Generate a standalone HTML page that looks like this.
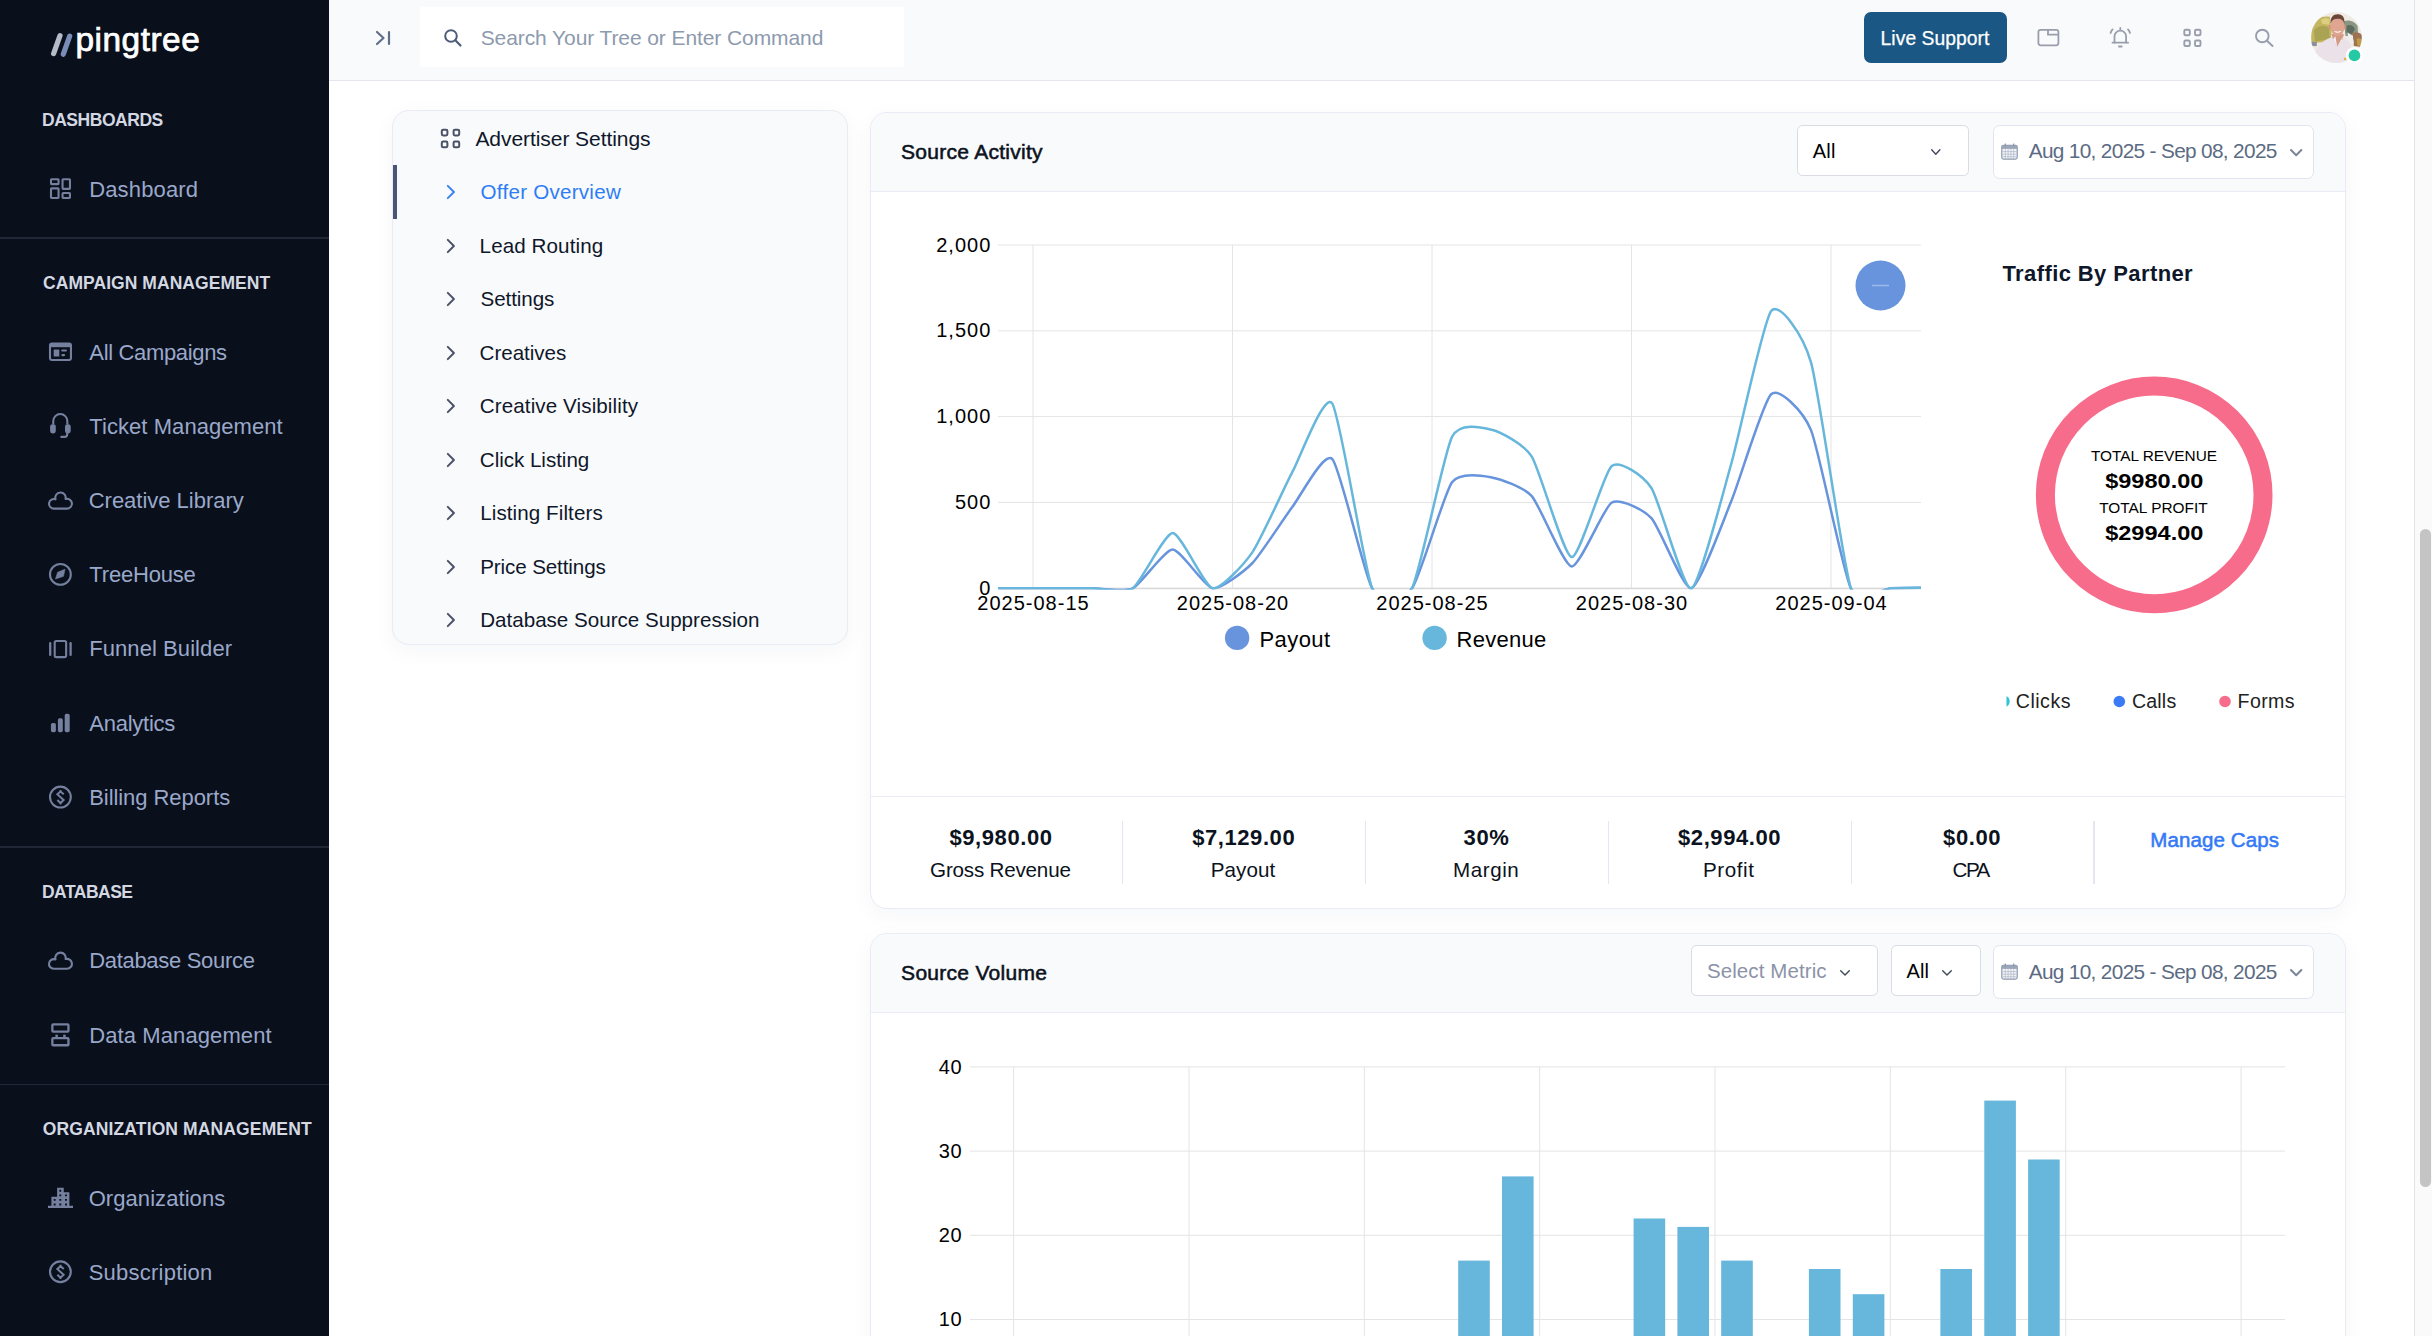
<!DOCTYPE html>
<html><head><meta charset="utf-8"><title>Pingtree</title>
<style>
*{box-sizing:border-box}
html,body{margin:0;padding:0;overflow:hidden}
#page{position:absolute;left:0;top:0;width:2432px;height:1336px;overflow:hidden}
body{width:2432px;height:1336px;overflow:hidden;position:relative;background:#fff;font-family:"Liberation Sans",sans-serif;color:#0f172a}
.abs{position:absolute}
.t{position:absolute;white-space:nowrap}
#side{position:absolute;left:0;top:0;width:328.7px;height:1336px;background:#090f1b}
.sd{position:absolute;left:0;width:329px;height:1.5px;background:#202838}
.ic{position:absolute;width:30px;height:30px;display:flex;align-items:center;justify-content:center}
#top{position:absolute;left:328.7px;top:0;width:2086px;height:81px;background:#f9fafb;border-bottom:1.2px solid #e3e6f1}
#search{position:absolute;left:419.5px;top:7.3px;width:484.5px;height:60.2px;background:#fff}
#live{position:absolute;left:1864.1px;top:12px;width:142.9px;height:51.2px;border-radius:7px;background:#1a5784}
#sbar{position:absolute;left:2414px;top:0;width:18px;height:1336px;background:#fafafa;border-left:1.5px solid #e4e4e4}
#sthumb{position:absolute;left:2419.5px;top:529px;width:11.5px;height:658px;border-radius:6px;background:#c4c4c4}
.card{position:absolute;background:#fff;border:1.5px solid #e9ebf5;border-radius:17px;box-shadow:0 6px 22px rgba(30,40,90,0.045);overflow:hidden}
.chead{position:absolute;left:0;top:0;right:0;height:79.3px;background:#f9fafb;border-bottom:1.5px solid #e9ebf5}
.ax{font-family:"Liberation Sans",sans-serif;font-size:20px;fill:#000;letter-spacing:1px}
.sel{position:absolute;background:#fff;border:1.5px solid #d9dce3;border-radius:5.5px}
.date{position:absolute;background:#fff;border:1.5px solid #e1e4ee;border-radius:6.5px}
.vsep{position:absolute;top:820.7px;width:1.5px;height:63.6px;background:#e4e7f1}
</style></head><body>
<div id="page">

<div id="side"></div>
<svg class="abs" style="left:48px;top:30px" width="28" height="30" viewBox="0 0 28 30"><line x1="5.6" y1="23.6" x2="12" y2="5.6" stroke="#b4bbc9" stroke-width="5.2" stroke-linecap="round"/><line x1="15.3" y1="24.2" x2="21.7" y2="6.2" stroke="#7a8cb8" stroke-width="5.2" stroke-linecap="round"/></svg>
<div class="t" style="left:75.50px;top:16.00px;font-size:33.4px;line-height:47px;font-weight:400;letter-spacing:0.515px;color:#fff;-webkit-text-stroke:0.75px #fff">pingtree</div>
<div class="t" style="left:42.00px;top:108.00px;font-size:17.5px;line-height:24px;font-weight:700;letter-spacing:-0.461px;color:#d3d8e2;">DASHBOARDS</div>
<div class="t" style="left:89.20px;top:174.00px;font-size:22px;line-height:31px;font-weight:400;letter-spacing:0.151px;color:#9aa8ca;">Dashboard</div>
<div class="sd" style="top:237.3px"></div>
<div class="t" style="left:43.00px;top:271.00px;font-size:17.5px;line-height:24px;font-weight:700;letter-spacing:0.055px;color:#d3d8e2;">CAMPAIGN MANAGEMENT</div>
<div class="t" style="left:89.30px;top:337.00px;font-size:22px;line-height:31px;font-weight:400;letter-spacing:-0.337px;color:#9aa8ca;">All Campaigns</div>
<div class="t" style="left:89.30px;top:411.00px;font-size:22px;line-height:31px;font-weight:400;letter-spacing:0.064px;color:#9aa8ca;">Ticket Management</div>
<div class="t" style="left:88.70px;top:485.00px;font-size:22px;line-height:31px;font-weight:400;letter-spacing:-0.012px;color:#9aa8ca;">Creative Library</div>
<div class="t" style="left:89.30px;top:559.00px;font-size:22px;line-height:31px;font-weight:400;letter-spacing:-0.185px;color:#9aa8ca;">TreeHouse</div>
<div class="t" style="left:89.20px;top:633.00px;font-size:22px;line-height:31px;font-weight:400;letter-spacing:0.074px;color:#9aa8ca;">Funnel Builder</div>
<div class="t" style="left:89.30px;top:708.00px;font-size:22px;line-height:31px;font-weight:400;letter-spacing:-0.254px;color:#9aa8ca;">Analytics</div>
<div class="t" style="left:89.20px;top:782.00px;font-size:22px;line-height:31px;font-weight:400;letter-spacing:-0.06px;color:#9aa8ca;">Billing Reports</div>
<div class="sd" style="top:846.3px"></div>
<div class="t" style="left:42.00px;top:880.00px;font-size:17.5px;line-height:24px;font-weight:700;letter-spacing:-0.522px;color:#d3d8e2;">DATABASE</div>
<div class="t" style="left:89.20px;top:945.00px;font-size:22px;line-height:31px;font-weight:400;letter-spacing:-0.304px;color:#9aa8ca;">Database Source</div>
<div class="t" style="left:89.20px;top:1020.00px;font-size:22px;line-height:31px;font-weight:400;letter-spacing:0.101px;color:#9aa8ca;">Data Management</div>
<div class="sd" style="top:1083.6px"></div>
<div class="t" style="left:42.80px;top:1117.00px;font-size:17.5px;line-height:24px;font-weight:700;letter-spacing:0.125px;color:#d3d8e2;">ORGANIZATION MANAGEMENT</div>
<div class="t" style="left:88.70px;top:1183.00px;font-size:22px;line-height:31px;font-weight:400;letter-spacing:0.063px;color:#9aa8ca;">Organizations</div>
<div class="t" style="left:88.70px;top:1257.00px;font-size:22px;line-height:31px;font-weight:400;letter-spacing:0.234px;color:#9aa8ca;">Subscription</div>

<svg class="abs" style="left:0;top:0" width="329" height="1336" viewBox="0 0 329 1336"><g fill="none" stroke="#74809e" stroke-width="2.1"><rect x="51.00" y="179.25" width="7.55" height="4.9" rx="0.6"/><rect x="62.55" y="179.25" width="7.4" height="9.6" rx="0.6"/><rect x="51.00" y="188.35" width="7.55" height="9.6" rx="0.6"/><rect x="62.55" y="193.05" width="7.4" height="4.9" rx="0.6"/></g><rect x="50.01" y="343.45" width="20.94" height="16.5" rx="1.9" fill="none" stroke="#74809e" stroke-width="2.1"/><rect x="49.96" y="343.40" width="21.04" height="3.8" fill="#74809e"/><rect x="53.66" y="349.40" width="5.65" height="7.1" rx="0.5" fill="#74809e"/><rect x="61.26" y="349.50" width="5.7" height="2" rx="1" fill="#74809e"/><rect x="61.26" y="353.90" width="3.9" height="2.3" rx="1.1" fill="#74809e"/><path d="M53.25 424.40V421.10a7.05 7.05 0 0 1 14.1 0V424.40" fill="none" stroke="#74809e" stroke-width="2.1"/><rect x="50.10" y="424.20" width="5.7" height="9.2" rx="2.4" fill="#74809e"/><rect x="65.00" y="424.20" width="5.7" height="9.2" rx="2.4" fill="#74809e"/><path d="M67.20 432.50v1.8a2.6 2.6 0 0 1-2.6 2.6h-3.3" fill="none" stroke="#74809e" stroke-width="2.1" stroke-linecap="round"/><path transform="translate(47.00 490.00)" d="M6.8 18.65A4.8 4.8 0 1 1 8.5 9.36A5.25 5.25 0 1 1 18.6 8.95A4.95 4.95 0 1 1 20 18.65Z" fill="none" stroke="#74809e" stroke-width="2.1" stroke-linejoin="round"/><circle cx="60.4" cy="574.4" r="10.4" fill="none" stroke="#74809e" stroke-width="2.1"/><path d="M65.00 569.20L63.50 576.30L55.50 579.00L57.60 572.30Z" fill="#74809e" stroke="#74809e" stroke-width="0.6" stroke-linejoin="round"/><rect x="54.70" y="641.05" width="11.45" height="16.1" rx="1.6" fill="none" stroke="#74809e" stroke-width="2.1"/><line x1="50.20" y1="643.20" x2="50.20" y2="654.90" fill="none" stroke="#74809e" stroke-width="2.3" stroke-linecap="round"/><line x1="70.60" y1="643.20" x2="70.60" y2="654.90" fill="none" stroke="#74809e" stroke-width="2.3" stroke-linecap="round"/><rect x="50.95" y="722.90" width="4.95" height="9.3" rx="1.7" fill="#74809e"/><rect x="57.90" y="718.20" width="4.9" height="14" rx="1.7" fill="#74809e"/><rect x="64.70" y="713.70" width="5" height="18.5" rx="1.7" fill="#74809e"/><circle cx="60.4" cy="797.05" r="10.4" fill="none" stroke="#74809e" stroke-width="2.1"/><path d="M63.75 794.35L60.50 791.50L57.35 794.35L63.60 800.05L60.50 803.00L57.35 800.05" fill="none" stroke="#74809e" stroke-width="2.0" stroke-linejoin="miter"/><path d="M60.50 790.05v2M60.50 802.45v1.8" fill="none" stroke="#74809e" stroke-width="1.8"/><path transform="translate(47.00 950.10)" d="M6.8 18.65A4.8 4.8 0 1 1 8.5 9.36A5.25 5.25 0 1 1 18.6 8.95A4.95 4.95 0 1 1 20 18.65Z" fill="none" stroke="#74809e" stroke-width="2.1" stroke-linejoin="round"/><rect x="52.35" y="1024.40" width="16.1" height="7.25" rx="0.8" fill="none" stroke="#74809e" stroke-width="2.3"/><rect x="52.35" y="1038.15" width="16.1" height="7.1" rx="0.8" fill="none" stroke="#74809e" stroke-width="2.3"/><rect x="55.40" y="1034.65" width="2.5" height="2.6" fill="#74809e"/><rect x="63.20" y="1034.65" width="2.5" height="2.6" fill="#74809e"/><path transform="translate(47.96 1187.70)" d="M3.44 9.1h5.7V0.4a0.4 0.4 0 0 1 .4-.4h5.85a0.4 0.4 0 0 1 .4.4V4.5h5.25a0.4 0.4 0 0 1 .4.4V18h3.6v2.3H0V18h3.44zM11.39 2.15h1.9v1.9h-1.9zM11.39 6.75h1.9v1.9h-1.9zM17.09 6.75h1.9v1.9h-1.9zM5.74 11.25h1.9v1.9h-1.9zM5.74 15.85h1.9v1.9h-1.9zM11.39 11.25h1.9v1.9h-1.9zM11.39 15.85h1.9v1.9h-1.9zM17.09 11.25h1.9v1.9h-1.9zM17.09 15.85h1.9v1.9h-1.9z" fill="#74809e" fill-rule="evenodd"/><circle cx="60.4" cy="1271.75" r="10.4" fill="none" stroke="#74809e" stroke-width="2.1"/><path d="M63.75 1269.05L60.50 1266.20L57.35 1269.05L63.60 1274.75L60.50 1277.70L57.35 1274.75" fill="none" stroke="#74809e" stroke-width="2.0" stroke-linejoin="miter"/><path d="M60.50 1264.75v2M60.50 1277.15v1.8" fill="none" stroke="#74809e" stroke-width="1.8"/></svg>

<div id="top"></div>
<svg class="abs" style="left:374px;top:28px" width="20" height="20" viewBox="0 0 20 20"><path d="M3 4l6.5 6-6.5 6" fill="none" stroke="#5f6f8a" stroke-width="2.2" stroke-linecap="round" stroke-linejoin="round"/><line x1="15" y1="4" x2="15" y2="16" stroke="#5f6f8a" stroke-width="2.2" stroke-linecap="round"/></svg>
<div id="search"></div>
<svg class="abs" style="left:442.5px;top:27.5px" width="20" height="20" viewBox="0 0 20 20"><circle cx="8" cy="8" r="5.8" fill="none" stroke="#4d5d78" stroke-width="2"/><line x1="12.3" y1="12.3" x2="17.5" y2="17.5" stroke="#4d5d78" stroke-width="2.2" stroke-linecap="round"/></svg>
<div class="t" style="left:480.70px;top:23.00px;font-size:21px;line-height:29px;font-weight:400;letter-spacing:-0.09px;color:#8d9aae;">Search Your Tree or Enter Command</div>
<div id="live"></div>
<div class="t" style="left:1880.60px;top:25.00px;font-size:19.3px;line-height:27px;font-weight:400;letter-spacing:0.045px;color:#fff;-webkit-text-stroke:0.25px #fff">Live Support</div>
<svg class="abs" style="left:2037px;top:28px" width="23" height="19" viewBox="0 0 23 19"><rect x="1.4" y="1.8" width="20" height="15.5" rx="2.2" fill="none" stroke="#999eac" stroke-width="1.8"/><path d="M11 2v4.7h10.4" fill="none" stroke="#999eac" stroke-width="1.8"/></svg>
<svg class="abs" style="left:2108px;top:26px" width="24" height="23" viewBox="0 0 24 23"><g fill="none" stroke="#999eac" stroke-width="1.8" stroke-linecap="round" stroke-linejoin="round"><path d="M6.5 16.5V10.5a5.8 5.8 0 0 1 11.6 0v6"/><path d="M4.5 16.7h15.6"/><path d="M12.3 2v2.2"/><path d="M10.9 20.5h2.8"/><path d="M4.6 3.4a9 9 0 0 0-2 3.6"/><path d="M20 3.4a9 9 0 0 1 2 3.6"/></g></svg>
<svg class="abs" style="left:2182px;top:27px" width="21" height="21" viewBox="0 0 21 21"><g fill="none" stroke="#999eac" stroke-width="1.9"><rect x="2.3" y="2.7" width="5.5" height="5.5" rx="1.3"/><rect x="13" y="2.7" width="5.5" height="5.5" rx="1.3"/><rect x="2.3" y="13.5" width="5.5" height="5.5" rx="1.3"/><rect x="13" y="13.5" width="5.5" height="5.5" rx="1.3"/></g></svg>
<svg class="abs" style="left:2253px;top:27px" width="22" height="22" viewBox="0 0 22 22"><circle cx="9.3" cy="9" r="6.3" fill="none" stroke="#999eac" stroke-width="1.9"/><line x1="14" y1="13.7" x2="19.5" y2="19" stroke="#999eac" stroke-width="2" stroke-linecap="round"/></svg>
<!-- avatar -->
<svg class="abs" style="left:2311.3px;top:11.8px" width="50.8" height="51" viewBox="115 125 1095 1100"><defs><clipPath id="av"><circle cx="662" cy="675" r="548"/></clipPath><filter id="bl" x="-10%" y="-10%" width="120%" height="120%"><feGaussianBlur stdDeviation="15"/></filter></defs><g clip-path="url(#av)"><rect x="100" y="100" width="1150" height="1150" fill="#efeae2"/><g filter="url(#bl)"><path d="M120 420C200 260 380 200 520 230L560 520 540 760 120 800z" fill="#c4b562"/><path d="M180 520C260 420 400 400 500 470L520 700 200 760z" fill="#a9a352"/><path d="M330 300C400 250 470 250 520 290L500 400 360 380z" fill="#dccf80"/><path d="M820 330C930 280 1060 330 1120 430L1130 620 860 640z" fill="#8a9684"/><path d="M880 420C960 380 1040 420 1060 500L1000 600 880 580z" fill="#5d6c5e"/><path d="M1010 580C1080 540 1160 560 1215 620L1215 880 1040 860z" fill="#9d7252"/><path d="M1100 700C1150 680 1200 700 1215 740L1215 860 1110 850z" fill="#c09a48"/><path d="M900 560L1010 640 1040 800 940 780z" fill="#eeeeee"/><rect x="100" y="770" width="140" height="90" fill="#8a8f9a"/><path d="M180 1250C160 980 260 800 480 700L640 640 800 690C960 740 1010 860 1030 1250z" fill="#ebe1e9"/><path d="M560 600L820 600 800 720 680 870 590 720z" fill="#d39a84"/><ellipse cx="688" cy="440" rx="152" ry="205" fill="#dfa590"/><ellipse cx="518" cy="450" rx="24" ry="50" fill="#d9927e"/><ellipse cx="845" cy="450" rx="20" ry="46" fill="#d9927e"/><path d="M540 380C520 240 600 170 700 175C800 180 850 250 832 380C815 300 770 270 690 268C610 266 560 300 540 380z" fill="#6a4638"/><path d="M620 545Q690 590 765 540Q695 565 620 545z" fill="#fff" stroke="#fff" stroke-width="10"/><path d="M640 640L680 870 590 720z" fill="#f4eef3"/><path d="M800 660L680 870 790 740z" fill="#f4eef3"/><circle cx="850" cy="1140" r="28" fill="#d7b83a"/></g></g><circle cx="1052" cy="1062" r="186" fill="#fff"/><circle cx="1052" cy="1062" r="126" fill="#25c9a4"/></svg>

<div id="sbar"></div><div id="sthumb"></div>

<!-- left panel -->
<div class="card" style="left:391.5px;top:109.8px;width:456.5px;height:535.5px;background:#f9fafb"></div>
<div class="abs" style="left:393px;top:165px;width:4.3px;height:53.5px;background:#4b5675"></div>
<svg class="abs" style="left:439.5px;top:127.5px" width="21" height="21" viewBox="0 0 21 21"><g fill="none" stroke="#4b5268" stroke-width="2"><rect x="1.8" y="1.8" width="5.6" height="5.6" rx="1.3"/><rect x="13.6" y="1.8" width="5.6" height="5.6" rx="1.3"/><rect x="1.8" y="13.6" width="5.6" height="5.6" rx="1.3"/><rect x="13.6" y="13.6" width="5.6" height="5.6" rx="1.3"/></g></svg>
<svg class="abs" style="left:445.0px;top:183.0px" width="12" height="18" viewBox="0 0 12 18"><path d="M2.8 2.9l6.1 6.1-6.1 6.1" fill="none" stroke="#3b82f6" stroke-width="2" stroke-linecap="round" stroke-linejoin="round"/></svg><div class="t" style="left:480.60px;top:177.00px;font-size:20.6px;line-height:29px;font-weight:400;letter-spacing:0.248px;color:#2f7df6;">Offer Overview</div>
<svg class="abs" style="left:445.0px;top:236.5px" width="12" height="18" viewBox="0 0 12 18"><path d="M2.8 2.9l6.1 6.1-6.1 6.1" fill="none" stroke="#4b5268" stroke-width="2" stroke-linecap="round" stroke-linejoin="round"/></svg><div class="t" style="left:479.60px;top:231.00px;font-size:20.6px;line-height:29px;font-weight:400;letter-spacing:0.094px;color:#0f172a;">Lead Routing</div>
<svg class="abs" style="left:445.0px;top:290.0px" width="12" height="18" viewBox="0 0 12 18"><path d="M2.8 2.9l6.1 6.1-6.1 6.1" fill="none" stroke="#4b5268" stroke-width="2" stroke-linecap="round" stroke-linejoin="round"/></svg><div class="t" style="left:480.60px;top:284.00px;font-size:20.6px;line-height:29px;font-weight:400;letter-spacing:-0.102px;color:#0f172a;">Settings</div>
<svg class="abs" style="left:445.0px;top:343.5px" width="12" height="18" viewBox="0 0 12 18"><path d="M2.8 2.9l6.1 6.1-6.1 6.1" fill="none" stroke="#4b5268" stroke-width="2" stroke-linecap="round" stroke-linejoin="round"/></svg><div class="t" style="left:479.60px;top:338.00px;font-size:20.6px;line-height:29px;font-weight:400;letter-spacing:-0.048px;color:#0f172a;">Creatives</div>
<svg class="abs" style="left:445.0px;top:397.0px" width="12" height="18" viewBox="0 0 12 18"><path d="M2.8 2.9l6.1 6.1-6.1 6.1" fill="none" stroke="#4b5268" stroke-width="2" stroke-linecap="round" stroke-linejoin="round"/></svg><div class="t" style="left:479.80px;top:391.00px;font-size:20.6px;line-height:29px;font-weight:400;letter-spacing:0.099px;color:#0f172a;">Creative Visibility</div>
<svg class="abs" style="left:445.0px;top:450.5px" width="12" height="18" viewBox="0 0 12 18"><path d="M2.8 2.9l6.1 6.1-6.1 6.1" fill="none" stroke="#4b5268" stroke-width="2" stroke-linecap="round" stroke-linejoin="round"/></svg><div class="t" style="left:479.80px;top:445.00px;font-size:20.6px;line-height:29px;font-weight:400;letter-spacing:-0.034px;color:#0f172a;">Click Listing</div>
<svg class="abs" style="left:445.0px;top:504.0px" width="12" height="18" viewBox="0 0 12 18"><path d="M2.8 2.9l6.1 6.1-6.1 6.1" fill="none" stroke="#4b5268" stroke-width="2" stroke-linecap="round" stroke-linejoin="round"/></svg><div class="t" style="left:480.20px;top:498.00px;font-size:20.6px;line-height:29px;font-weight:400;letter-spacing:0.085px;color:#0f172a;">Listing Filters</div>
<svg class="abs" style="left:445.0px;top:557.5px" width="12" height="18" viewBox="0 0 12 18"><path d="M2.8 2.9l6.1 6.1-6.1 6.1" fill="none" stroke="#4b5268" stroke-width="2" stroke-linecap="round" stroke-linejoin="round"/></svg><div class="t" style="left:480.20px;top:552.00px;font-size:20.6px;line-height:29px;font-weight:400;letter-spacing:-0.112px;color:#0f172a;">Price Settings</div>
<svg class="abs" style="left:445.0px;top:611.0px" width="12" height="18" viewBox="0 0 12 18"><path d="M2.8 2.9l6.1 6.1-6.1 6.1" fill="none" stroke="#4b5268" stroke-width="2" stroke-linecap="round" stroke-linejoin="round"/></svg><div class="t" style="left:480.20px;top:605.00px;font-size:20.6px;line-height:29px;font-weight:400;letter-spacing:-0.003px;color:#0f172a;">Database Source Suppression</div>
<div class="t" style="left:475.40px;top:124.00px;font-size:21px;line-height:29px;font-weight:400;letter-spacing:-0.058px;color:#0f172a;">Advertiser Settings</div>

<!-- source activity card -->
<div class="card" style="left:869.7px;top:111.8px;width:1476.2px;height:797px">
 <div class="chead"></div>
 <div class="abs" style="left:0;right:0;top:683.2px;height:1.5px;background:#e9ebf5"></div>
</div>
<div class="t" style="left:901.10px;top:137.00px;font-size:21px;line-height:29px;font-weight:400;letter-spacing:0.266px;color:#0b1220;-webkit-text-stroke:0.55px currentColor">Source Activity</div>
<div class="sel" style="left:1797.2px;top:124.8px;width:171.7px;height:50.8px"></div>
<div class="t" style="left:1812.70px;top:137.00px;font-size:20px;line-height:28px;font-weight:400;letter-spacing:0.208px;color:#000;">All</div>
<svg class="abs" style="left:1928.7px;top:147.4px" width="13.6" height="9.9" viewBox="-2 -2 13.6 9.9"><path d="M0.70 0.70L4.80 5.20L8.90 0.70" fill="none" stroke="#3f4a5a" stroke-width="1.4" stroke-linecap="round" stroke-linejoin="round"/></svg>
<div class="date" style="left:1992.7px;top:124.8px;width:321px;height:53.9px"></div><svg class="abs" style="left:2001.4px;top:142.6px" width="17" height="17" viewBox="0 0 17 17"><rect x="0.8" y="2.3" width="15.4" height="13.8" rx="1.8" fill="#f3f5f9" stroke="#8b97aa" stroke-width="1.2"/><rect x="0.8" y="2.3" width="15.4" height="3.6" fill="#9ba6b8"/><g stroke="#8b97aa" stroke-width="1.2"><line x1="4.3" y1="0.5" x2="4.3" y2="3.5"/><line x1="12.7" y1="0.5" x2="12.7" y2="3.5"/></g><g stroke="#b4bccb" stroke-width="0.8"><line x1="1.5" y1="8.6" x2="15.5" y2="8.6"/><line x1="1.5" y1="11.2" x2="15.5" y2="11.2"/><line x1="1.5" y1="13.7" x2="15.5" y2="13.7"/><line x1="4.3" y1="6.2" x2="4.3" y2="15.5"/><line x1="7.1" y1="6.2" x2="7.1" y2="15.5"/><line x1="9.9" y1="6.2" x2="9.9" y2="15.5"/><line x1="12.7" y1="6.2" x2="12.7" y2="15.5"/></g></svg><div class="t" style="left:2028.70px;top:136.00px;font-size:20.8px;line-height:29px;font-weight:400;letter-spacing:-0.665px;color:#5b6b83;">Aug 10, 2025 - Sep 08, 2025</div><svg class="abs" style="left:2288.4px;top:146.6px" width="16.4" height="11.2" viewBox="-2 -2 16.4 11.2"><path d="M1.00 1.00L6.20 6.20L11.40 1.00" fill="none" stroke="#7b8799" stroke-width="2" stroke-linecap="round" stroke-linejoin="round"/></svg>

<svg class="abs" style="left:0;top:0" width="2432" height="800" viewBox="0 0 2432 800">
<defs><clipPath id="plot"><rect x="996" y="240" width="926" height="349.5"/></clipPath><clipPath id="lc"><rect x="2006.5" y="690" width="20" height="24"/></clipPath></defs>
<line x1="998" y1="245.0" x2="1921" y2="245.0" stroke="#e4e4e4" stroke-width="1"/><text x="991.3" y="251.6" text-anchor="end" class="ax">2,000</text><line x1="998" y1="330.8" x2="1921" y2="330.8" stroke="#e4e4e4" stroke-width="1"/><text x="991.3" y="337.4" text-anchor="end" class="ax">1,500</text><line x1="998" y1="416.6" x2="1921" y2="416.6" stroke="#e4e4e4" stroke-width="1"/><text x="991.3" y="423.2" text-anchor="end" class="ax">1,000</text><line x1="998" y1="502.4" x2="1921" y2="502.4" stroke="#e4e4e4" stroke-width="1"/><text x="991.3" y="509.0" text-anchor="end" class="ax">500</text><line x1="998" y1="588.2" x2="1921" y2="588.2" stroke="#e4e4e4" stroke-width="1"/><text x="991.3" y="594.8" text-anchor="end" class="ax">0</text><line x1="1033.0" y1="245" x2="1033.0" y2="588" stroke="#e4e4e4" stroke-width="1"/><text x="1033.5" y="610.4" text-anchor="middle" class="ax">2025-08-15</text><line x1="1232.5" y1="245" x2="1232.5" y2="588" stroke="#e4e4e4" stroke-width="1"/><text x="1233.0" y="610.4" text-anchor="middle" class="ax">2025-08-20</text><line x1="1432.0" y1="245" x2="1432.0" y2="588" stroke="#e4e4e4" stroke-width="1"/><text x="1432.5" y="610.4" text-anchor="middle" class="ax">2025-08-25</text><line x1="1631.5" y1="245" x2="1631.5" y2="588" stroke="#e4e4e4" stroke-width="1"/><text x="1632.0" y="610.4" text-anchor="middle" class="ax">2025-08-30</text><line x1="1831.0" y1="245" x2="1831.0" y2="588" stroke="#e4e4e4" stroke-width="1"/><text x="1831.5" y="610.4" text-anchor="middle" class="ax">2025-09-04</text>
<line x1="998" y1="588.5" x2="1921" y2="588.5" stroke="#d9d9d9" stroke-width="1.5"/>
<g clip-path="url(#plot)" fill="none" stroke-width="2.5" stroke-linejoin="round">
<path d="M998.0,588.3C1003.5,588.3 1043.5,588.3 1053.0,588.3C1062.4,588.3 1084.9,588.3 1092.8,588.3C1100.8,588.3 1124.8,592.2 1132.8,588.3C1140.7,584.4 1164.7,549.6 1172.7,549.6C1180.6,549.6 1204.6,587.0 1212.5,588.3C1220.5,589.6 1244.5,571.1 1252.5,563.0C1260.4,554.8 1284.4,517.4 1292.3,507.0C1300.3,496.6 1324.3,450.8 1332.2,458.9C1340.2,467.0 1364.2,575.4 1372.2,588.3C1380.1,601.2 1404.1,598.9 1412.0,588.3C1420.0,577.7 1444.0,493.4 1452.0,482.3C1459.9,471.2 1483.9,476.0 1491.8,477.4C1499.8,478.8 1523.8,487.2 1531.8,496.1C1539.7,505.0 1563.7,565.8 1571.7,566.5C1579.6,567.1 1603.6,507.7 1611.5,502.8C1619.5,498.0 1643.5,509.5 1651.4,518.1C1659.4,526.6 1683.4,590.0 1691.3,588.3C1699.3,586.6 1723.3,520.7 1731.2,501.3C1739.2,481.9 1763.2,401.3 1771.2,394.2C1779.1,387.1 1803.1,410.7 1811.0,430.1C1819.0,449.5 1843.0,572.5 1850.9,588.3C1858.9,604.1 1883.8,588.3 1890.8,588.3C1897.9,588.2 1918.0,587.8 1921.0,587.8" stroke="#6794dc"/>
<path d="M998.0,588.3C1003.5,588.3 1043.5,588.3 1053.0,588.3C1062.4,588.3 1084.9,588.3 1092.8,588.3C1100.8,588.3 1124.8,593.8 1132.8,588.3C1140.7,582.8 1164.7,533.1 1172.7,533.1C1180.6,533.1 1204.6,586.4 1212.5,588.3C1220.5,590.2 1244.5,563.7 1252.5,552.1C1260.4,540.5 1284.4,487.1 1292.3,472.2C1300.3,457.3 1324.3,391.8 1332.2,403.4C1340.2,415.0 1364.2,569.8 1372.2,588.3C1380.1,606.8 1404.1,603.4 1412.0,588.3C1420.0,573.2 1444.0,452.7 1452.0,436.9C1459.9,421.0 1483.9,427.9 1491.8,429.8C1499.8,431.8 1523.8,443.9 1531.8,456.6C1539.7,469.3 1563.7,556.1 1571.7,557.1C1579.6,558.0 1603.6,473.1 1611.5,466.2C1619.5,459.3 1643.5,475.8 1651.4,488.0C1659.4,500.2 1683.4,590.7 1691.3,588.3C1699.3,585.9 1723.3,491.7 1731.2,464.0C1739.2,436.2 1763.2,321.2 1771.2,311.0C1779.1,300.8 1803.1,334.5 1811.0,362.3C1819.0,390.0 1843.0,565.7 1850.9,588.3C1858.9,610.9 1883.8,588.3 1890.8,588.3C1897.9,588.2 1918.0,587.8 1921.0,587.8" stroke="#67b7dc"/>
</g>
<circle cx="1880.5" cy="285.5" r="25" fill="#6794dc"/>
<line x1="1872" y1="285.5" x2="1889" y2="285.5" stroke="#9fbaea" stroke-width="1.5"/>
<circle cx="1237.1" cy="637.9" r="12.2" fill="#6794dc"/>
<text x="1259.50" y="646.5" style="font-family:'Liberation Sans',sans-serif;font-size:22px;font-weight:400;fill:#000;letter-spacing:0.424px">Payout</text>
<circle cx="1434.6" cy="637.9" r="12.2" fill="#67b7dc"/>
<text x="1456.50" y="646.5" style="font-family:'Liberation Sans',sans-serif;font-size:22px;font-weight:400;fill:#000;letter-spacing:0.278px">Revenue</text>
<!-- donut -->
<circle cx="2154.2" cy="494.9" r="108.8" fill="none" stroke="#f86c8b" stroke-width="19"/>
<text x="2090.90" y="460.9" style="font-family:'Liberation Sans',sans-serif;font-size:15.4px;font-weight:400;fill:#000;letter-spacing:-0.008px">TOTAL REVENUE</text>
<text x="2105.2" y="488.1" textLength="98.2" lengthAdjust="spacingAndGlyphs" style="font-family:'Liberation Sans',sans-serif;font-size:19.4px;font-weight:700;fill:#000">$9980.00</text>
<text x="2099.20" y="512.7" style="font-family:'Liberation Sans',sans-serif;font-size:15.4px;font-weight:400;fill:#000;letter-spacing:0.011px">TOTAL PROFIT</text>
<text x="2105.2" y="540.4" textLength="98.2" lengthAdjust="spacingAndGlyphs" style="font-family:'Liberation Sans',sans-serif;font-size:19.4px;font-weight:700;fill:#000">$2994.00</text>
<!-- pie legend -->
<circle cx="2004" cy="701.4" r="5.7" fill="#2bc3d6" clip-path="url(#lc)"/>
<text x="2015.80" y="707.8" style="font-family:'Liberation Sans',sans-serif;font-size:19.6px;font-weight:400;fill:#222;letter-spacing:0.49px">Clicks</text>
<circle cx="2119.3" cy="701.5" r="5.8" fill="#3b7cf6"/>
<text x="2131.90" y="707.8" style="font-family:'Liberation Sans',sans-serif;font-size:19.6px;font-weight:400;fill:#222;letter-spacing:0.187px">Calls</text>
<circle cx="2225" cy="701.5" r="5.8" fill="#f86c8b"/>
<text x="2237.60" y="707.8" style="font-family:'Liberation Sans',sans-serif;font-size:19.6px;font-weight:400;fill:#222;letter-spacing:0.372px">Forms</text>
</svg>
<div class="t" style="left:2002.50px;top:258.00px;font-size:22px;line-height:31px;font-weight:700;letter-spacing:0.398px;color:#0f172a;">Traffic By Partner</div>

<!-- stats -->
<div class="t" style="left:949.50px;top:822.00px;font-size:22px;line-height:31px;font-weight:700;letter-spacing:0.57px;color:#0b1220;">$9,980.00</div><div class="t" style="left:930.10px;top:855.00px;font-size:20.6px;line-height:29px;font-weight:400;letter-spacing:-0.194px;color:#0b1220;">Gross Revenue</div>
<div class="t" style="left:1192.20px;top:822.00px;font-size:22px;line-height:31px;font-weight:700;letter-spacing:0.57px;color:#0b1220;">$7,129.00</div><div class="t" style="left:1210.70px;top:855.00px;font-size:20.6px;line-height:29px;font-weight:400;letter-spacing:0.101px;color:#0b1220;">Payout</div>
<div class="t" style="left:1463.60px;top:822.00px;font-size:22px;line-height:31px;font-weight:700;letter-spacing:0.565px;color:#0b1220;">30%</div><div class="t" style="left:1453.10px;top:855.00px;font-size:20.6px;line-height:29px;font-weight:400;letter-spacing:0.541px;color:#0b1220;">Margin</div>
<div class="t" style="left:1678.00px;top:822.00px;font-size:22px;line-height:31px;font-weight:700;letter-spacing:0.583px;color:#0b1220;">$2,994.00</div><div class="t" style="left:1702.90px;top:855.00px;font-size:20.6px;line-height:29px;font-weight:400;letter-spacing:0.611px;color:#0b1220;">Profit</div>
<div class="t" style="left:1943.10px;top:822.00px;font-size:22px;line-height:31px;font-weight:700;letter-spacing:0.595px;color:#0b1220;">$0.00</div><div class="t" style="left:1952.60px;top:855.00px;font-size:20.6px;line-height:29px;font-weight:400;letter-spacing:-1.59px;color:#0b1220;">CPA</div>
<div class="vsep" style="left:1121.8px"></div><div class="vsep" style="left:1364.8px"></div><div class="vsep" style="left:1607.5px"></div><div class="vsep" style="left:1850.9px"></div><div class="vsep" style="left:2093.1px"></div><div class="t" style="left:2150.30px;top:825.00px;font-size:20.5px;line-height:29px;font-weight:400;letter-spacing:0.102px;color:#3479f6;-webkit-text-stroke:0.55px currentColor">Manage Caps</div>

<!-- source volume card -->
<div class="card" style="left:869.7px;top:932.5px;width:1476.2px;height:460px">
 <div class="chead"></div>
</div>
<div class="t" style="left:901.10px;top:958.00px;font-size:21px;line-height:29px;font-weight:400;letter-spacing:0.28px;color:#0b1220;-webkit-text-stroke:0.55px currentColor">Source Volume</div>
<div class="sel" style="left:1691.4px;top:945.3px;width:186.9px;height:51px"></div>
<div class="t" style="left:1706.90px;top:956.00px;font-size:20.5px;line-height:29px;font-weight:400;letter-spacing:0.098px;color:#8b92a8;">Select Metric</div>
<svg class="abs" style="left:1838.0px;top:968.2px" width="14.0" height="9.8" viewBox="-2 -2 14.0 9.8"><path d="M0.70 0.70L5.00 5.10L9.30 0.70" fill="none" stroke="#3f4a5a" stroke-width="1.4" stroke-linecap="round" stroke-linejoin="round"/></svg>
<div class="sel" style="left:1890.5px;top:945.3px;width:90.1px;height:51px"></div>
<div class="t" style="left:1906.60px;top:957.00px;font-size:20px;line-height:28px;font-weight:400;letter-spacing:0.108px;color:#000;">All</div>
<svg class="abs" style="left:1940.0px;top:968.2px" width="14.0" height="9.8" viewBox="-2 -2 14.0 9.8"><path d="M0.70 0.70L5.00 5.10L9.30 0.70" fill="none" stroke="#3f4a5a" stroke-width="1.4" stroke-linecap="round" stroke-linejoin="round"/></svg>
<div class="date" style="left:1992.7px;top:945.3px;width:321px;height:53.9px"></div><svg class="abs" style="left:2001.4px;top:963.1px" width="17" height="17" viewBox="0 0 17 17"><rect x="0.8" y="2.3" width="15.4" height="13.8" rx="1.8" fill="#f3f5f9" stroke="#8b97aa" stroke-width="1.2"/><rect x="0.8" y="2.3" width="15.4" height="3.6" fill="#9ba6b8"/><g stroke="#8b97aa" stroke-width="1.2"><line x1="4.3" y1="0.5" x2="4.3" y2="3.5"/><line x1="12.7" y1="0.5" x2="12.7" y2="3.5"/></g><g stroke="#b4bccb" stroke-width="0.8"><line x1="1.5" y1="8.6" x2="15.5" y2="8.6"/><line x1="1.5" y1="11.2" x2="15.5" y2="11.2"/><line x1="1.5" y1="13.7" x2="15.5" y2="13.7"/><line x1="4.3" y1="6.2" x2="4.3" y2="15.5"/><line x1="7.1" y1="6.2" x2="7.1" y2="15.5"/><line x1="9.9" y1="6.2" x2="9.9" y2="15.5"/><line x1="12.7" y1="6.2" x2="12.7" y2="15.5"/></g></svg><div class="t" style="left:2028.70px;top:957.00px;font-size:20.8px;line-height:29px;font-weight:400;letter-spacing:-0.665px;color:#5b6b83;">Aug 10, 2025 - Sep 08, 2025</div><svg class="abs" style="left:2288.4px;top:967.1px" width="16.4" height="11.2" viewBox="-2 -2 16.4 11.2"><path d="M1.00 1.00L6.20 6.20L11.40 1.00" fill="none" stroke="#7b8799" stroke-width="2" stroke-linecap="round" stroke-linejoin="round"/></svg>
<svg class="abs" style="left:0;top:1014px" width="2432" height="322" viewBox="0 1014 2432 322">
<line x1="970" y1="1066.9" x2="2285" y2="1066.9" stroke="#e4e4e4" stroke-width="1"/><text x="962.2" y="1073.8" text-anchor="end" class="ax" style="letter-spacing:0.6px">40</text><line x1="970" y1="1151.1" x2="2285" y2="1151.1" stroke="#e4e4e4" stroke-width="1"/><text x="962.2" y="1158.0" text-anchor="end" class="ax" style="letter-spacing:0.6px">30</text><line x1="970" y1="1235.3" x2="2285" y2="1235.3" stroke="#e4e4e4" stroke-width="1"/><text x="962.2" y="1242.2" text-anchor="end" class="ax" style="letter-spacing:0.6px">20</text><line x1="970" y1="1319.5" x2="2285" y2="1319.5" stroke="#e4e4e4" stroke-width="1"/><text x="962.2" y="1326.4" text-anchor="end" class="ax" style="letter-spacing:0.6px">10</text><line x1="1013.6" y1="1067" x2="1013.6" y2="1336" stroke="#e4e4e4" stroke-width="1"/><line x1="1189.0" y1="1067" x2="1189.0" y2="1336" stroke="#e4e4e4" stroke-width="1"/><line x1="1364.3" y1="1067" x2="1364.3" y2="1336" stroke="#e4e4e4" stroke-width="1"/><line x1="1539.7" y1="1067" x2="1539.7" y2="1336" stroke="#e4e4e4" stroke-width="1"/><line x1="1715.0" y1="1067" x2="1715.0" y2="1336" stroke="#e4e4e4" stroke-width="1"/><line x1="1890.3" y1="1067" x2="1890.3" y2="1336" stroke="#e4e4e4" stroke-width="1"/><line x1="2065.7" y1="1067" x2="2065.7" y2="1336" stroke="#e4e4e4" stroke-width="1"/><line x1="2241.1" y1="1067" x2="2241.1" y2="1336" stroke="#e4e4e4" stroke-width="1"/><rect x="1458.2" y="1260.6" width="31.6" height="79.4" fill="#67b7dc"/><rect x="1502.0" y="1176.4" width="31.6" height="163.6" fill="#67b7dc"/><rect x="1633.6" y="1218.5" width="31.6" height="121.5" fill="#67b7dc"/><rect x="1677.4" y="1226.9" width="31.6" height="113.1" fill="#67b7dc"/><rect x="1721.2" y="1260.6" width="31.6" height="79.4" fill="#67b7dc"/><rect x="1808.9" y="1269.0" width="31.6" height="71.0" fill="#67b7dc"/><rect x="1852.8" y="1294.2" width="31.6" height="45.8" fill="#67b7dc"/><rect x="1940.4" y="1269.0" width="31.6" height="71.0" fill="#67b7dc"/><rect x="1984.3" y="1100.6" width="31.6" height="239.4" fill="#67b7dc"/><rect x="2028.1" y="1159.5" width="31.6" height="180.5" fill="#67b7dc"/>
</svg>

</div>
</body></html>
